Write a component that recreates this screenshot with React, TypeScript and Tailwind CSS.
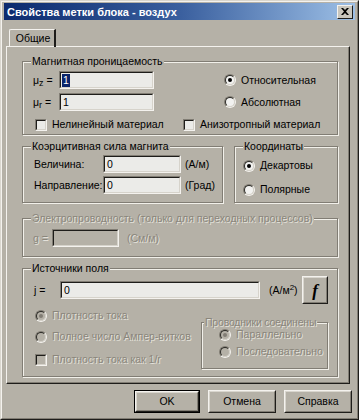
import React from "react";

const BG = "bg-[#b5b1a7]";
const DIS = "text-[#8a867c] [text-shadow:1px_1px_0_#e4e1da]";

function Group({
  className = "",
  legend,
  disabled,
  legendClass = "left-[8px]",
  children,
}: {
  className?: string;
  legend: React.ReactNode;
  disabled?: boolean;
  legendClass?: string;
  children?: React.ReactNode;
}) {
  return (
    <div
      className={`relative border border-[#817d74] shadow-[inset_1px_1px_0_#f2f0ea,1px_1px_0_#f2f0ea] ${className}`}
    >
      <span
        className={`absolute top-[-8px] ${legendClass} ${BG} px-[1px] leading-[14px] whitespace-nowrap ${
          disabled ? DIS : "text-black"
        }`}
      >
        {legend}
      </span>
      {children}
    </div>
  );
}

function Edit({
  w,
  value,
  disabled,
  selected,
}: {
  w: string;
  value?: string;
  disabled?: boolean;
  selected?: boolean;
}) {
  return (
    <div
      className={`${w} h-[18px] shrink-0 border border-t-[#817d74] border-l-[#817d74] border-b-[#f4f2ee] border-r-[#f4f2ee]`}
    >
      <div
        className={`h-full border border-t-[#1e1d1a] border-l-[#1e1d1a] border-b-[#d6d3cb] border-r-[#d6d3cb] ${
          disabled ? BG : "bg-[#ebebe8]"
        } flex items-center pl-[1px] leading-[13px]`}
      >
        {value !== undefined &&
          (selected ? (
            <span className="bg-[#0a246a] text-white px-[1px]">{value}</span>
          ) : (
            <span className="pl-[1px]">{value}</span>
          ))}
      </div>
    </div>
  );
}

function Radio({
  checked,
  disabled,
  label,
  className = "",
}: {
  checked?: boolean;
  disabled?: boolean;
  label: string;
  className?: string;
}) {
  return (
    <div className={`flex items-center ${className}`}>
      <div className="w-[12px] h-[12px] rounded-full border border-t-[#817d74] border-l-[#817d74] border-b-[#f4f2ee] border-r-[#f4f2ee] shrink-0">
        <div
          className={`w-full h-full rounded-full border border-t-[#2a2925] border-l-[#2a2925] border-b-[#d6d3cb] border-r-[#d6d3cb] flex items-center justify-center ${
            disabled ? BG : "bg-[#f2f2f0]"
          }`}
        >
          {checked && (
            <div
              className={`w-[4px] h-[4px] rounded-full ${
                disabled ? "bg-[#817d74]" : "bg-black"
              }`}
            />
          )}
        </div>
      </div>
      <span className={`ml-[5px] leading-[13px] whitespace-nowrap ${disabled ? DIS : ""}`}>
        {label}
      </span>
    </div>
  );
}

function Check({
  disabled,
  label,
  className = "",
}: {
  disabled?: boolean;
  label: React.ReactNode;
  className?: string;
}) {
  return (
    <div className={`flex items-center ${className}`}>
      <div className="w-[12px] h-[12px] border border-t-[#817d74] border-l-[#817d74] border-b-[#f4f2ee] border-r-[#f4f2ee] shrink-0">
        <div
          className={`w-full h-full border border-t-[#1e1d1a] border-l-[#1e1d1a] border-b-[#d6d3cb] border-r-[#d6d3cb] ${
            disabled ? BG : "bg-[#ebebe8]"
          }`}
        />
      </div>
      <span className={`ml-[5px] leading-[13px] whitespace-nowrap ${disabled ? DIS : ""}`}>
        {label}
      </span>
    </div>
  );
}

function Btn({
  children,
  w,
  def,
}: {
  children: React.ReactNode;
  w: string;
  def?: boolean;
}) {
  return (
    <div className={`${w} h-[23px] ${def ? "border border-black" : ""}`}>
      <div className="h-full border border-t-[#f4f2ee] border-l-[#f4f2ee] border-b-[#1e1d1a] border-r-[#1e1d1a]">
        <div className="h-full border border-t-[#d9d6ce] border-l-[#d9d6ce] border-b-[#817d74] border-r-[#817d74] flex items-center justify-center leading-[13px]">
          {children}
        </div>
      </div>
    </div>
  );
}

export default function App() {
  return (
    <div
      className={`w-[359px] h-[420px] ${BG} text-[10.5px] text-black font-['Liberation_Sans',Arial,sans-serif] border border-t-[#d9d6ce] border-l-[#d9d6ce] border-r-[#1e1d1a] border-b-[#1e1d1a] overflow-hidden`}
    >
      <div className="h-full border border-t-[#f4f2ee] border-l-[#f4f2ee] border-r-[#817d74] border-b-[#817d74] px-[2px] pt-[1px] flex flex-col">
        {/* title bar */}
        <div className="h-[17px] shrink-0 bg-gradient-to-r from-[#0c2a6e] via-[#3a5f9e] to-[#9ec0e6] flex items-center pl-[3px] pr-[2px]">
          <span className="text-white font-bold text-[11px] leading-[14px] whitespace-nowrap">
            Свойства метки блока - воздух
          </span>
          <div className="ml-auto w-[16px] h-[14px] border border-t-[#f4f2ee] border-l-[#f4f2ee] border-b-[#1e1d1a] border-r-[#1e1d1a] bg-[#c9c6bd] flex items-center justify-center">
            <svg width="8" height="7" viewBox="0 0 8 7">
              <path d="M0 0 L2 0 L4 2 L6 0 L8 0 L5 3.5 L8 7 L6 7 L4 5 L2 7 L0 7 L3 3.5 Z" fill="#000" />
            </svg>
          </div>
        </div>

        {/* tab strip */}
        <div className="mt-[6px] ml-[2px] flex h-[20px] shrink-0 items-end">
          <div className="ml-[3px] w-[47px] h-[18px] border-t border-l border-[#f4f2ee] border-r-2 border-r-[#1e1d1a] flex items-center justify-center rounded-tl-[2px] relative z-10 -mb-[1px]">
            <span className="leading-[13px] ml-[2px]">Общие</span>
          </div>
        </div>

        {/* panel */}
        <div className="ml-[2px] w-[344px] h-[338px] shrink-0 border border-t-[#f4f2ee] border-l-[#f4f2ee] border-r-[#1e1d1a] border-b-[#1e1d1a]">
          <div className="h-full border-r border-b border-[#817d74] pl-[15px] pt-[14px]">
            {/* Group 1 */}
            <Group legend="Магнитная проницаемость" className="w-[316px] h-[74px]">
              <div className="pt-[9px] pl-[10px]">
                <div className="flex items-center h-[18px]">
                  <span className="w-[26px] leading-[13px]">
                    μ<sub className="text-[9px]">z</sub> =
                  </span>
                  <Edit w="w-[95px]" value="1" selected />
                  <Radio checked label="Относительная" className="ml-[70px]" />
                </div>
                <div className="flex items-center h-[18px] mt-[4px]">
                  <span className="w-[26px] leading-[13px]">
                    μ<sub className="text-[9px]">r</sub> =
                  </span>
                  <Edit w="w-[95px]" value="1" />
                  <Radio label="Абсолютная" className="ml-[70px]" />
                </div>
                <div className="flex items-center mt-[7px]">
                  <Check label="Нелинейный материал" className="ml-[2px] w-[148px]" />
                  <Check label="Анизотропный материал" />
                </div>
              </div>
            </Group>

            <div className="flex mt-[11px]">
              {/* Group 2 */}
              <Group legend="Коэрцитивная сила магнита" className="w-[201px] h-[57px]">
                <div className="pt-[8px] pl-[11px]">
                  <div className="flex items-center h-[18px]">
                    <span className="w-[69px] leading-[13px]">Величина:</span>
                    <Edit w="w-[78px]" value="0" />
                    <span className="ml-[4px] leading-[13px]">(А/м)</span>
                  </div>
                  <div className="flex items-center h-[18px] mt-[3px]">
                    <span className="w-[69px] leading-[13px] whitespace-nowrap">Направление:</span>
                    <Edit w="w-[78px]" value="0" />
                    <span className="ml-[4px] leading-[13px]">(Град)</span>
                  </div>
                </div>
              </Group>
              {/* Group 3 */}
              <Group legend="Координаты" className="ml-[11px] w-[104px] h-[57px]">
                <div className="pt-[12px] pl-[8px]">
                  <Radio checked label="Декартовы" />
                  <Radio label="Полярные" className="mt-[11px]" />
                </div>
              </Group>
            </div>

            {/* Group 4 */}
            <Group
              legend="Электропроводность (только для переходных процессов)"
              disabled
              className="mt-[15px] w-[316px] h-[39px]"
            >
              <div className="pt-[10px] pl-[10px] flex items-center">
                <span className={`w-[19px] leading-[13px] ${DIS}`}>g =</span>
                <Edit w="w-[67px]" disabled />
                <span className={`ml-[8px] leading-[13px] ${DIS}`}>(См/м)</span>
              </div>
            </Group>

            {/* Group 5 */}
            <Group legend="Источники поля" className="mt-[11px] w-[316px] h-[109px]">
              <div className="pt-[7px] pl-[11px] pr-[9px]">
                <div className="flex items-center h-[28px]">
                  <span className="w-[26px] leading-[13px]">j =</span>
                  <Edit w="w-[200px]" value="0" />
                  <span className="ml-[9px] leading-[13px]">
                    (А/м<sup className="text-[8px]">2</sup>)
                  </span>
                  <div className="ml-auto w-[26px] h-[28px] border border-t-[#f4f2ee] border-l-[#f4f2ee] border-b-[#1e1d1a] border-r-[#1e1d1a]">
                    <div className="h-full border border-t-[#d9d6ce] border-l-[#d9d6ce] border-b-[#817d74] border-r-[#817d74] flex items-center justify-center">
                      <span className="font-['Liberation_Serif',serif] font-bold italic text-[17px] leading-[17px]">
                        f
                      </span>
                    </div>
                  </div>
                </div>
                <div className="flex mt-[2px]">
                  <div className="pl-[1px] pt-[3px]">
                    <Radio checked disabled label="Плотность тока" />
                    <Radio disabled label="Полное число Ампер-витков" className="mt-[8px]" />
                    <Check disabled label="Плотность тока как 1/r" className="mt-[10px]" />
                  </div>
                  <Group
                    legend="Проводники соединены"
                    disabled
                    legendClass="left-[2px] tracking-[-0.2px]"
                    className="ml-auto mt-[16px] w-[127px] h-[47px]"
                  >
                    <div className="pt-[5px] pl-[17px]">
                      <Radio checked disabled label="Параллельно" />
                      <Radio disabled label="Последовательно" className="mt-[4px]" />
                    </div>
                  </Group>
                </div>
              </div>
            </Group>
          </div>
        </div>

        {/* buttons */}
        <div className="flex justify-end mt-[6px] pr-[3px] gap-[8px]">
          <Btn w="w-[66px]" def>
            OK
          </Btn>
          <Btn w="w-[68px]">Отмена</Btn>
          <Btn w="w-[68px]">Справка</Btn>
        </div>
      </div>
    </div>
  );
}
